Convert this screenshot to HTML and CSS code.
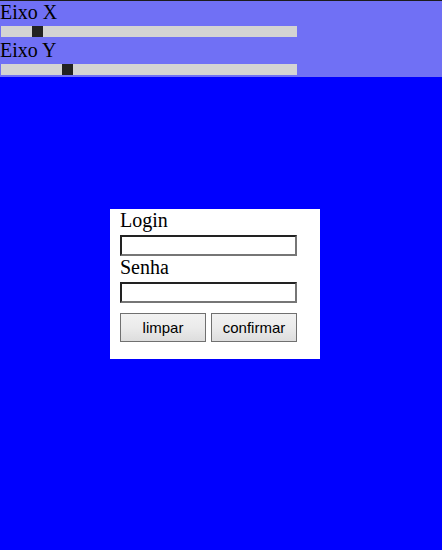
FILE: index.html
```html
<!DOCTYPE html>
<html lang="pt">
<head>
<meta charset="utf-8">
<title>Login</title>
<link rel="stylesheet" href="styles.css">
</head>
<body>
  <div class="controls">
    <div class="axis-label">Eixo X</div>
    <div class="track"><div class="thumb" style="margin-left: 31px"></div></div>
    <div class="axis-label">Eixo Y</div>
    <div class="track"><div class="thumb" style="margin-left: 61px"></div></div>
  </div>
  <div class="stage">
    <form class="login-box">
      <label class="field-label" for="login">Login</label>
      <input class="field" id="login" type="text">
      <label class="field-label" for="senha">Senha</label>
      <input class="field" id="senha" type="password">
      <div class="actions">
        <button class="btn" type="button">limpar</button>
        <button class="btn" type="button">confirmar</button>
      </div>
    </form>
  </div>
</body>
</html>
```
FILE: styles.css
```css
html, body {
  margin: 0;
  padding: 0;
  background: #0000ff;
  font-family: "Liberation Serif", "Times New Roman", serif;
  font-size: 20px;
  color: #000;
}

.controls {
  background: #7070f5;
  border-top: 1px solid #1c1c1c;
  padding-bottom: 2px;
  display: flex;
  flex-direction: column;
}

.axis-label {
  height: 22px;
  line-height: 22px;
  margin-bottom: 3px;
}

.track {
  display: flex;
  width: 296px;
  height: 11px;
  margin-left: 1px;
  margin-bottom: 2px;
  background: #d3d3d3;
}

.track:last-child {
  margin-bottom: 0;
}

.thumb {
  width: 11px;
  height: 11px;
  background: #222222;
}

.stage {
  min-height: 473px;
  padding: 132px 0 0 110px;
  box-sizing: border-box;
}

.login-box {
  width: 210px;
  box-sizing: border-box;
  background: #ffffff;
  padding: 0 10px 17px 10px;
  margin: 0;
  display: flex;
  flex-direction: column;
  align-items: flex-start;
}

.field-label {
  display: block;
  height: 23px;
  line-height: 22px;
  margin-bottom: 3px;
}

.field {
  width: 177px;
  height: 21px;
  box-sizing: border-box;
  margin: 0;
  padding: 1px 2px;
  border-width: 2px;
  border-style: solid;
  border-color: #222222 #767676 #767676 #222222;
  background: #ffffff;
  font-family: "Liberation Sans", Arial, sans-serif;
  font-size: 13px;
  outline: none;
}

.actions {
  display: flex;
  gap: 5px;
  margin-top: 10px;
}

.btn {
  width: 86px;
  height: 29px;
  box-sizing: border-box;
  margin: 0;
  padding: 0;
  border: 1px solid #707070;
  border-radius: 0;
  background: linear-gradient(to bottom, #f2f2f2 0%, #ebebeb 50%, #dddddd 100%);
  font-family: "Liberation Sans", Arial, sans-serif;
  font-size: 15px;
  color: #000;
}
```
